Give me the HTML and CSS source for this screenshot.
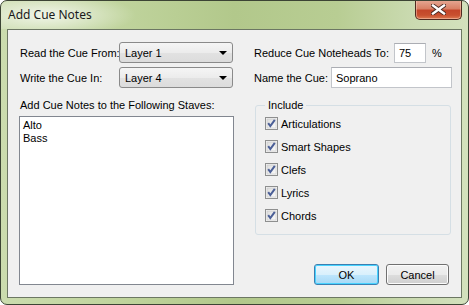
FILE: index.html
```html
<!DOCTYPE html>
<html>
<head>
<meta charset="utf-8">
<link rel="stylesheet" href="styles.css">
</head>
<body>
<div class="window">
  <div class="titlebar">
    <span class="title">Add Cue Notes</span>
    <div class="close">
      <svg width="15" height="11" viewBox="0 0 15 11">
        <path d="M2 1.5 L13 9.5 M13 1.5 L2 9.5" stroke="#4b2a22" stroke-width="4.2" stroke-linecap="square" fill="none"/>
        <path d="M2 1.5 L13 9.5 M13 1.5 L2 9.5" stroke="#ffffff" stroke-width="2.4" stroke-linecap="square" fill="none"/>
      </svg>
    </div>
  </div>
  <div class="client">
    <div class="left">
      <div class="row">
        <span class="lbl lbl-read">Read the Cue From:</span>
        <div class="combo"><span>Layer 1</span><i class="arrow"></i></div>
      </div>
      <div class="row row2">
        <span class="lbl lbl-read">Write the Cue In:</span>
        <div class="combo"><span>Layer 4</span><i class="arrow"></i></div>
      </div>
      <div class="lbl staves">Add Cue Notes to the Following Staves:</div>
      <div class="listbox">
        <div class="item">Alto</div>
        <div class="item">Bass</div>
      </div>
    </div>
    <div class="right">
      <div class="row">
        <span class="lbl lbl-reduce">Reduce Cue Noteheads To:</span>
        <div class="edit edit-pct">75</div>
        <span class="pct">%</span>
      </div>
      <div class="row row2">
        <span class="lbl lbl-name">Name the Cue:</span>
        <div class="edit edit-name">Soprano</div>
      </div>
      <div class="group">
        <span class="legend">Include</span>
        <div class="check"><svg class="cb" width="13" height="13" viewBox="0 0 13 13"><use href="#cbx"/></svg><span>Articulations</span></div>
        <div class="check"><svg class="cb" width="13" height="13" viewBox="0 0 13 13"><use href="#cbx"/></svg><span>Smart Shapes</span></div>
        <div class="check"><svg class="cb" width="13" height="13" viewBox="0 0 13 13"><use href="#cbx"/></svg><span>Clefs</span></div>
        <div class="check"><svg class="cb" width="13" height="13" viewBox="0 0 13 13"><use href="#cbx"/></svg><span>Lyrics</span></div>
        <div class="check"><svg class="cb" width="13" height="13" viewBox="0 0 13 13"><use href="#cbx"/></svg><span>Chords</span></div>
      </div>
      <div class="buttons">
        <div class="btn btn-ok">OK</div>
        <div class="btn btn-cancel">Cancel</div>
      </div>
    </div>
  </div>
</div>
<svg width="0" height="0" class="defs">
  <defs>
    <linearGradient id="cbg" x1="0" y1="0" x2="1" y2="1">
      <stop offset="0" stop-color="#dcdcdc"/>
      <stop offset="1" stop-color="#fbfbfb"/>
    </linearGradient>
    <g id="cbx">
      <rect x="0.5" y="0.5" width="12" height="12" fill="#f4f4f4" stroke="#8e8f8f"/>
      <rect x="2" y="2" width="9" height="9" fill="url(#cbg)" stroke="#c6c6c6" stroke-width="0.6"/>
      <path d="M3.2 6.2 L5.3 9 L9.8 2.8" stroke="#4b5f97" stroke-width="2" fill="none"/>
    </g>
  </defs>
</svg>
</body>
</html>
```
FILE: styles.css
```css
html, body {
  margin: 0;
  padding: 0;
  background: #ffffff;
}
.defs { position: absolute; }
.window {
  width: 469px;
  height: 305px;
  box-sizing: border-box;
  border: 1px solid #3c4434;
  border-radius: 7px;
  background: linear-gradient(to right, #cbdcae 0%, #c0d49d 25%, #b2c88b 50%, #b8cd93 72%, #cadab0 88%, #d3e1bd 100%);
  display: flex;
  flex-direction: column;
  overflow: hidden;
  font-family: "Liberation Sans", Arial, sans-serif;
  font-size: 11px;
  color: #000;
}
.titlebar {
  height: 28px;
  flex: none;
  display: flex;
  justify-content: space-between;
  align-items: flex-start;
  background: radial-gradient(ellipse 90px 22px at 45px 14px, rgba(255,255,255,0.75), rgba(255,255,255,0) 100%);
}
.title {
  font-family: "Noto Sans", "Open Sans", sans-serif;
  font-size: 12px;
  color: #1a1a1a;
  margin: 6px 0 0 7px;
  line-height: 16px;
}
.close {
  width: 47px;
  height: 20px;
  box-sizing: border-box;
  margin: -1px 6px 0 0;
  border: 1px solid #4f2a20;
  border-top: none;
  border-radius: 0 0 5px 5px;
  background: linear-gradient(#e6a995 0%, #d88166 45%, #c4462a 55%, #c8502f 80%, #dd7a52 100%);
  box-shadow: inset 0 0 0 1px rgba(255,220,200,0.45);
  display: flex;
  align-items: center;
  justify-content: center;
}
.client {
  flex: 1;
  margin: 0 6px 6px 6px;
  border: 1px solid #6c7763;
  background: #f0f0f0;
  display: flex;
  padding: 12px 0 0 11px;
  box-sizing: border-box;
}
.left {
  width: 215px;
  display: flex;
  flex-direction: column;
}
.right {
  width: 198px;
  margin-left: 20px;
  display: flex;
  flex-direction: column;
}
.row {
  display: flex;
  align-items: center;
  height: 21px;
}
.row2 { margin-top: 4px; }
.lbl { white-space: nowrap; }
.lbl-read { width: 100px; padding-left: 1px; box-sizing: border-box; }
.combo {
  width: 114px;
  height: 21px;
  box-sizing: border-box;
  border: 1px solid #8a8a8a;
  border-radius: 3px;
  background: linear-gradient(#f5f5f5, #ececec 50%, #e2e2e2 51%, #dcdcdc);
  display: flex;
  align-items: center;
  justify-content: space-between;
  padding: 0 4px 0 5px;
}
.arrow {
  width: 0;
  height: 0;
  border-left: 4px solid transparent;
  border-right: 4px solid transparent;
  border-top: 4px solid #000;
  margin-right: 1px;
}
.staves {
  margin-top: 11px;
  line-height: 13px;
  padding-left: 1px;
}
.listbox {
  margin-top: 4px;
  height: 169px;
  box-sizing: border-box;
  border: 1px solid #828790;
  background: #fff;
  padding: 2px 3px;
}
.item { line-height: 13px; }
.lbl-reduce { width: 140px; }
.lbl-name { width: 77px; }
.edit {
  height: 20px;
  box-sizing: border-box;
  border: 1px solid #c2c5ca;
  border-top-color: #abadb3;
  background: #fff;
  display: flex;
  align-items: center;
  padding-left: 4px;
}
.edit-pct { width: 32px; }
.edit-name { width: 121px; height: 21px; }
.pct { margin-left: 6px; }
.group {
  position: relative;
  margin: 17px 0 0 1px;
  width: 196px;
  height: 130px;
  box-sizing: border-box;
  border: 1px solid #d5dfe5;
  border-radius: 3px;
  padding: 11px 0 0 9px;
}
.legend {
  position: absolute;
  top: -7px;
  left: 9px;
  padding: 0 3px;
  background: #f0f0f0;
  line-height: 13px;
}
.check {
  display: flex;
  align-items: center;
  height: 13px;
  margin-bottom: 10px;
}
.cb { flex: none; margin-right: 3px; }
.buttons {
  display: flex;
  justify-content: flex-end;
  gap: 7px;
  margin: 29px 3px 0 0;
}
.btn {
  height: 21px;
  box-sizing: border-box;
  border-radius: 3px;
  display: flex;
  align-items: center;
  justify-content: center;
}
.btn-ok {
  width: 65px;
  border: 1px solid #3c7fb1;
  background: linear-gradient(#eaf6fd, #d9f0fc 50%, #bee6fd 51%, #a7d9f5);
  box-shadow: inset 0 0 0 1px #48d3ff;
}
.btn-cancel {
  width: 63px;
  border: 1px solid #707070;
  background: linear-gradient(#f2f2f2, #ebebeb 50%, #dddddd 51%, #cfcfcf);
  box-shadow: inset 0 0 0 1px #fcfcfc;
}
```
